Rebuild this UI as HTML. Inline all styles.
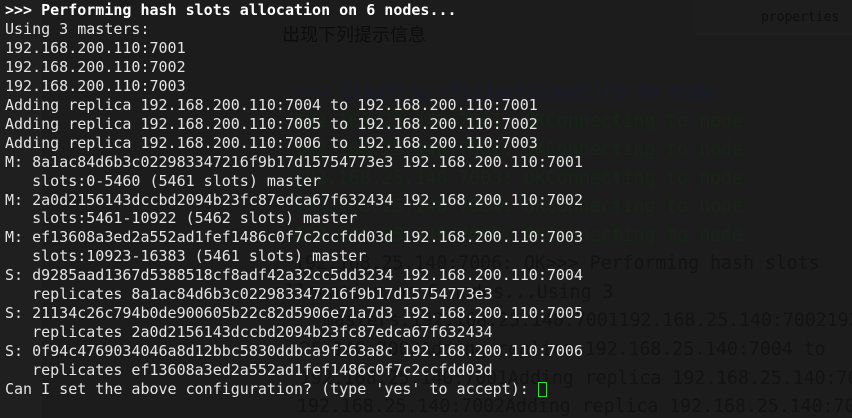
<!DOCTYPE html>
<html><head><meta charset="utf-8"><style>
html,body{margin:0;padding:0;}
body{width:852px;height:418px;overflow:hidden;background:#1c1c1c;position:relative;font-family:"DejaVu Sans Mono","Liberation Mono",monospace;}
.wrap{position:absolute;left:0;top:0;width:852px;height:418px;overflow:hidden;}
.l{position:absolute;left:0;top:0;width:42px;height:418px;background:#1f1f1f;}
.g{position:absolute;font-size:18.2px;white-space:pre;line-height:20px;}
.b{color:#181c2c}.gr{color:#182418}.k{color:#131313}
#t{position:absolute;left:5px;top:1px;margin:0;font-size:15px;line-height:18.95px;color:#e4e4e4;white-space:pre;font-family:inherit;}
#t b{color:#fff}
.cur{display:inline-block;width:9px;height:15px;border:1px solid #2fe02f;box-sizing:border-box;vertical-align:-3px;}
.cn{position:absolute;left:282px;top:21px;font-family:"Liberation Sans","Noto Sans CJK SC",sans-serif;font-size:18px;color:#0d0d0d;}
.pr{position:absolute;left:695px;top:0;width:157px;height:34px;background:#1d1d1d;border-bottom:1px solid #222;}
.pr span{position:absolute;left:66px;top:10px;font-size:13px;color:#0e0e0e;}
</style></head><body><div class="wrap">
<div class="l"></div>
<div class="pr"><span>properties</span></div>
<div class="cn">出现下列提示信息</div>
<div class="g b" style="left:298px;top:83px">&gt;&gt;&gt; Creating clusterConnecting to node</div>
<div class="g gr" style="left:294px;top:112px">192.168.25.140:7001: OKConnecting to node</div>
<div class="g gr" style="left:294px;top:140px">192.168.25.140:7002: OKConnecting to node</div>
<div class="g gr" style="left:294px;top:169px">192.168.25.140:7003: OKConnecting to node</div>
<div class="g gr" style="left:294px;top:197px">192.168.25.140:7004: OKConnecting to node</div>
<div class="g gr" style="left:294px;top:226px">192.168.25.140:7005: OKConnecting to node</div>
<div class="g k" style="left:294px;top:254px">192.168.25.140:7006: OK&gt;&gt;&gt; Performing hash slots</div>
<div class="g k" style="left:274px;top:283px">allocation on 6 nodes...Using 3</div>
<div class="g k" style="left:323px;top:311px">masters:192.168.25.140:7001192.168.25.140:7002192.1</div>
<div class="g k" style="left:300px;top:340px">25.140:7003Adding replica 192.168.25.140:7004 to</div>
<div class="g k" style="left:300px;top:369px">192.168.25.140:7001Adding replica 192.168.25.140:70</div>
<div class="g k" style="left:297px;top:397px">192.168.25.140:7002Adding replica 192.168.25.140:70</div>
<pre id="t"><b>&gt;&gt;&gt; Performing hash slots allocation on 6 nodes...</b>
Using 3 masters:
192.168.200.110:7001
192.168.200.110:7002
192.168.200.110:7003
Adding replica 192.168.200.110:7004 to 192.168.200.110:7001
Adding replica 192.168.200.110:7005 to 192.168.200.110:7002
Adding replica 192.168.200.110:7006 to 192.168.200.110:7003
M: 8a1ac84d6b3c022983347216f9b17d15754773e3 192.168.200.110:7001
   slots:0-5460 (5461 slots) master
M: 2a0d2156143dccbd2094b23fc87edca67f632434 192.168.200.110:7002
   slots:5461-10922 (5462 slots) master
M: ef13608a3ed2a552ad1fef1486c0f7c2ccfdd03d 192.168.200.110:7003
   slots:10923-16383 (5461 slots) master
S: d9285aad1367d5388518cf8adf42a32cc5dd3234 192.168.200.110:7004
   replicates 8a1ac84d6b3c022983347216f9b17d15754773e3
S: 21134c26c794b0de900605b22c82d5906e71a7d3 192.168.200.110:7005
   replicates 2a0d2156143dccbd2094b23fc87edca67f632434
S: 0f94c4769034046a8d12bbc5830ddbca9f263a8c 192.168.200.110:7006
   replicates ef13608a3ed2a552ad1fef1486c0f7c2ccfdd03d
Can I set the above configuration? (type 'yes' to accept): <span class="cur"></span></pre>
</div></body></html>
